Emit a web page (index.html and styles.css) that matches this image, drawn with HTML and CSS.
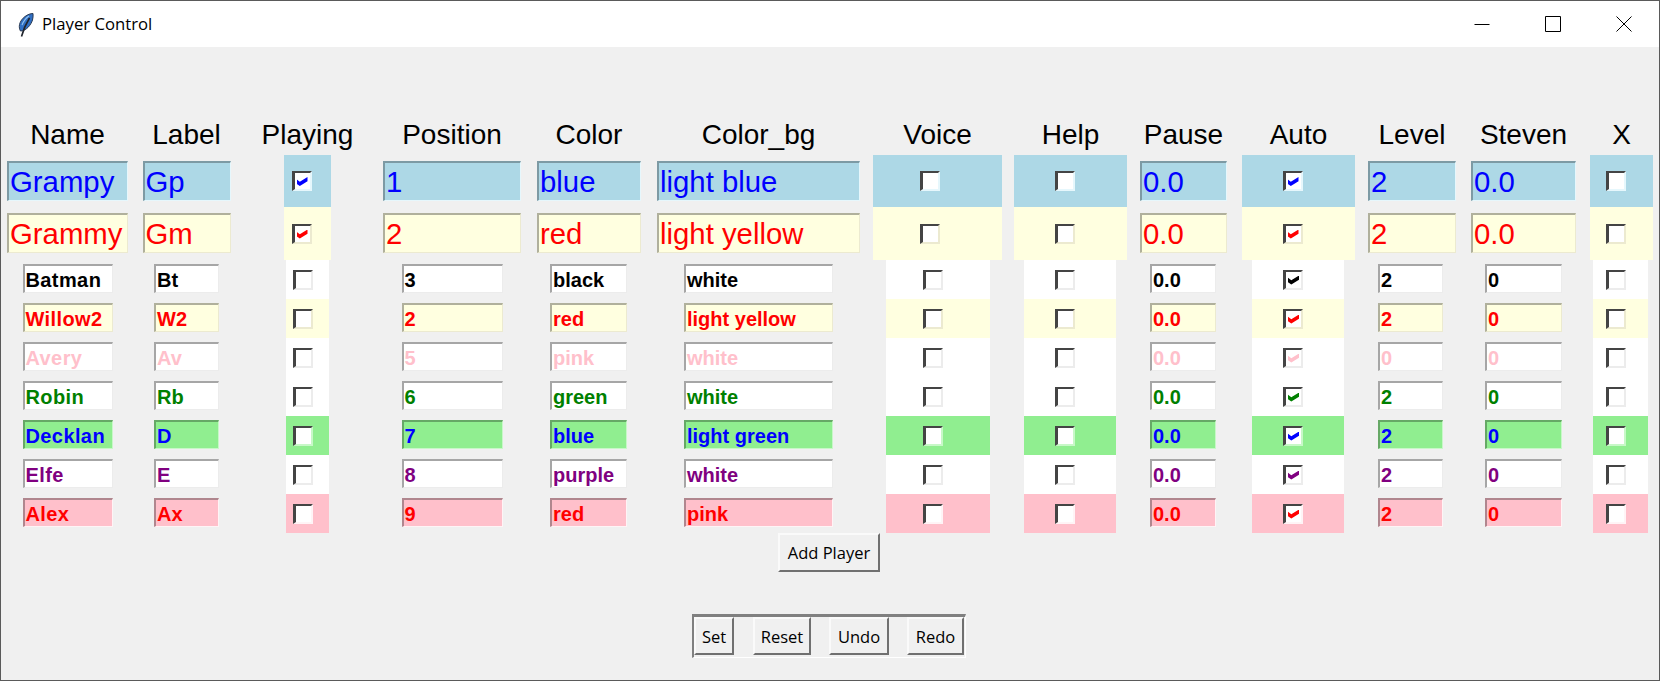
FILE: index.html
```html
<!DOCTYPE html>
<html>
<head>
  <meta charset="utf-8">
  <link rel="stylesheet" href="styles.css">
  <title>Player Control</title>
</head>
<body>
  <div class="window">
    <div class="titlebar">
      <svg class="feather" width="16" height="24" viewBox="0 0 16 24">
        <path d="M15 0.500C10 0.500 3 5 1.500 11.500c-.5 2.500 0 5 1 6.500C8 18 13 12 14.500 7c.5-2 .8-4.500 .5-6.500z" fill="#2f6fc4" stroke="#2b3a52" stroke-width="1"/>
        <path d="M11.500 5C9 9 6 14 3.500 23.500" fill="none" stroke="#20242c" stroke-width="1.600"/>
        <path d="M11 3C8 5 5.500 8 4 12" fill="none" stroke="#8fc0ee" stroke-width="1.200"/>
      </svg>
      <span class="title">Player Control</span>
      <div class="winctl">
        <svg width="16" height="16" viewBox="0 0 16 16"><path d="M0.500 8.500H15.500" stroke="#000" fill="none"/></svg>
        <svg width="16" height="16" viewBox="0 0 16 16"><path d="M0.500 0.500H15.500V15.500H0.500Z" stroke="#000" fill="none"/></svg>
        <svg width="16" height="16" viewBox="0 0 16 16"><path d="M0.500 0.500L15.500 15.500M15.500 0.500L0.500 15.500" stroke="#000" fill="none"/></svg>
      </div>
    </div>

    <div class="content">
      <div class="row head">
        <div>Name</div><div>Label</div><div>Playing</div><div>Position</div><div>Color</div><div>Color_bg</div><div>Voice</div><div>Help</div><div>Pause</div><div>Auto</div><div>Level</div><div>Steven</div><div>X</div>
      </div>

      <div class="row big r1 bg-blue fg-blue">
        <div class="cell"><div class="entry w-name">Grampy</div></div>
        <div class="cell"><div class="entry w-label">Gp</div></div>
        <div class="cell"><div class="band w-playing"><span class="check on"></span></div></div>
        <div class="cell"><div class="entry w-position">1</div></div>
        <div class="cell"><div class="entry w-color">blue</div></div>
        <div class="cell"><div class="entry w-colorbg">light blue</div></div>
        <div class="cell"><div class="band w-voice"><span class="check"></span></div></div>
        <div class="cell"><div class="band w-help"><span class="check"></span></div></div>
        <div class="cell"><div class="entry w-pause">0.0</div></div>
        <div class="cell"><div class="band w-auto"><span class="check on"></span></div></div>
        <div class="cell"><div class="entry w-level">2</div></div>
        <div class="cell"><div class="entry w-steven">0.0</div></div>
        <div class="cell"><div class="band w-x"><span class="check"></span></div></div>
      </div>

      <div class="row big r2 bg-yellow fg-red">
        <div class="cell"><div class="entry w-name">Grammy</div></div>
        <div class="cell"><div class="entry w-label">Gm</div></div>
        <div class="cell"><div class="band w-playing"><span class="check on"></span></div></div>
        <div class="cell"><div class="entry w-position">2</div></div>
        <div class="cell"><div class="entry w-color">red</div></div>
        <div class="cell"><div class="entry w-colorbg">light yellow</div></div>
        <div class="cell"><div class="band w-voice"><span class="check"></span></div></div>
        <div class="cell"><div class="band w-help"><span class="check"></span></div></div>
        <div class="cell"><div class="entry w-pause">0.0</div></div>
        <div class="cell"><div class="band w-auto"><span class="check on"></span></div></div>
        <div class="cell"><div class="entry w-level">2</div></div>
        <div class="cell"><div class="entry w-steven">0.0</div></div>
        <div class="cell"><div class="band w-x"><span class="check"></span></div></div>
      </div>

      <div class="row small bg-white fg-black">
        <div class="cell"><div class="entry w-name">Batman</div></div>
        <div class="cell"><div class="entry w-label">Bt</div></div>
        <div class="cell"><div class="band w-playing"><span class="check"></span></div></div>
        <div class="cell"><div class="entry w-position">3</div></div>
        <div class="cell"><div class="entry w-color">black</div></div>
        <div class="cell"><div class="entry w-colorbg">white</div></div>
        <div class="cell"><div class="band w-voice"><span class="check"></span></div></div>
        <div class="cell"><div class="band w-help"><span class="check"></span></div></div>
        <div class="cell"><div class="entry w-pause">0.0</div></div>
        <div class="cell"><div class="band w-auto"><span class="check on"></span></div></div>
        <div class="cell"><div class="entry w-level">2</div></div>
        <div class="cell"><div class="entry w-steven">0</div></div>
        <div class="cell"><div class="band w-x"><span class="check"></span></div></div>
      </div>

      <div class="row small bg-yellow fg-red">
        <div class="cell"><div class="entry w-name">Willow2</div></div>
        <div class="cell"><div class="entry w-label">W2</div></div>
        <div class="cell"><div class="band w-playing"><span class="check"></span></div></div>
        <div class="cell"><div class="entry w-position">2</div></div>
        <div class="cell"><div class="entry w-color">red</div></div>
        <div class="cell"><div class="entry w-colorbg">light yellow</div></div>
        <div class="cell"><div class="band w-voice"><span class="check"></span></div></div>
        <div class="cell"><div class="band w-help"><span class="check"></span></div></div>
        <div class="cell"><div class="entry w-pause">0.0</div></div>
        <div class="cell"><div class="band w-auto"><span class="check on"></span></div></div>
        <div class="cell"><div class="entry w-level">2</div></div>
        <div class="cell"><div class="entry w-steven">0</div></div>
        <div class="cell"><div class="band w-x"><span class="check"></span></div></div>
      </div>

      <div class="row small bg-white fg-pink">
        <div class="cell"><div class="entry w-name">Avery</div></div>
        <div class="cell"><div class="entry w-label">Av</div></div>
        <div class="cell"><div class="band w-playing"><span class="check"></span></div></div>
        <div class="cell"><div class="entry w-position">5</div></div>
        <div class="cell"><div class="entry w-color">pink</div></div>
        <div class="cell"><div class="entry w-colorbg">white</div></div>
        <div class="cell"><div class="band w-voice"><span class="check"></span></div></div>
        <div class="cell"><div class="band w-help"><span class="check"></span></div></div>
        <div class="cell"><div class="entry w-pause">0.0</div></div>
        <div class="cell"><div class="band w-auto"><span class="check on"></span></div></div>
        <div class="cell"><div class="entry w-level">0</div></div>
        <div class="cell"><div class="entry w-steven">0</div></div>
        <div class="cell"><div class="band w-x"><span class="check"></span></div></div>
      </div>

      <div class="row small bg-white fg-green">
        <div class="cell"><div class="entry w-name">Robin</div></div>
        <div class="cell"><div class="entry w-label">Rb</div></div>
        <div class="cell"><div class="band w-playing"><span class="check"></span></div></div>
        <div class="cell"><div class="entry w-position">6</div></div>
        <div class="cell"><div class="entry w-color">green</div></div>
        <div class="cell"><div class="entry w-colorbg">white</div></div>
        <div class="cell"><div class="band w-voice"><span class="check"></span></div></div>
        <div class="cell"><div class="band w-help"><span class="check"></span></div></div>
        <div class="cell"><div class="entry w-pause">0.0</div></div>
        <div class="cell"><div class="band w-auto"><span class="check on"></span></div></div>
        <div class="cell"><div class="entry w-level">2</div></div>
        <div class="cell"><div class="entry w-steven">0</div></div>
        <div class="cell"><div class="band w-x"><span class="check"></span></div></div>
      </div>

      <div class="row small bg-green fg-blue">
        <div class="cell"><div class="entry w-name">Decklan</div></div>
        <div class="cell"><div class="entry w-label">D</div></div>
        <div class="cell"><div class="band w-playing"><span class="check"></span></div></div>
        <div class="cell"><div class="entry w-position">7</div></div>
        <div class="cell"><div class="entry w-color">blue</div></div>
        <div class="cell"><div class="entry w-colorbg">light green</div></div>
        <div class="cell"><div class="band w-voice"><span class="check"></span></div></div>
        <div class="cell"><div class="band w-help"><span class="check"></span></div></div>
        <div class="cell"><div class="entry w-pause">0.0</div></div>
        <div class="cell"><div class="band w-auto"><span class="check on"></span></div></div>
        <div class="cell"><div class="entry w-level">2</div></div>
        <div class="cell"><div class="entry w-steven">0</div></div>
        <div class="cell"><div class="band w-x"><span class="check"></span></div></div>
      </div>

      <div class="row small bg-white fg-purple">
        <div class="cell"><div class="entry w-name">Elfe</div></div>
        <div class="cell"><div class="entry w-label">E</div></div>
        <div class="cell"><div class="band w-playing"><span class="check"></span></div></div>
        <div class="cell"><div class="entry w-position">8</div></div>
        <div class="cell"><div class="entry w-color">purple</div></div>
        <div class="cell"><div class="entry w-colorbg">white</div></div>
        <div class="cell"><div class="band w-voice"><span class="check"></span></div></div>
        <div class="cell"><div class="band w-help"><span class="check"></span></div></div>
        <div class="cell"><div class="entry w-pause">0.0</div></div>
        <div class="cell"><div class="band w-auto"><span class="check on"></span></div></div>
        <div class="cell"><div class="entry w-level">2</div></div>
        <div class="cell"><div class="entry w-steven">0</div></div>
        <div class="cell"><div class="band w-x"><span class="check"></span></div></div>
      </div>

      <div class="row small bg-pink fg-red">
        <div class="cell"><div class="entry w-name">Alex</div></div>
        <div class="cell"><div class="entry w-label">Ax</div></div>
        <div class="cell"><div class="band w-playing"><span class="check"></span></div></div>
        <div class="cell"><div class="entry w-position">9</div></div>
        <div class="cell"><div class="entry w-color">red</div></div>
        <div class="cell"><div class="entry w-colorbg">pink</div></div>
        <div class="cell"><div class="band w-voice"><span class="check"></span></div></div>
        <div class="cell"><div class="band w-help"><span class="check"></span></div></div>
        <div class="cell"><div class="entry w-pause">0.0</div></div>
        <div class="cell"><div class="band w-auto"><span class="check on"></span></div></div>
        <div class="cell"><div class="entry w-level">2</div></div>
        <div class="cell"><div class="entry w-steven">0</div></div>
        <div class="cell"><div class="band w-x"><span class="check"></span></div></div>
      </div>

      <button type="button" class="btn add-player">Add Player</button>

      <div class="actions">
        <button type="button" class="btn">Set</button>
        <button type="button" class="btn">Reset</button>
        <button type="button" class="btn">Undo</button>
        <button type="button" class="btn">Redo</button>
      </div>
    </div>
  </div>
</body>
</html>
```

FILE: styles.css
```css
:root {
	--face: #f0f0f0;
	--columns: 133px 105px 137px 152px 122px 217px 141px 125px 101px 129px 98px 125px 71px;
}

body {
	margin: 0;
	background-color: white;
	font-family: "Liberation Sans", Arial, sans-serif;
}

.window {
	box-sizing: border-box;
	height: 681px;
	overflow: hidden;
	border: 1px solid #5a5a5a;
	background-color: var(--face);
}

/* Title bar */
.titlebar {
	display: flex;
	align-items: center;
	height: 46px;
	background-color: white;
}

.feather {
	margin-left: 17px;
	margin-top: 1px;
}

.title {
	margin-left: 8px;
	padding-bottom: 2px;
	font-family: "Open Sans", sans-serif;
	font-size: 16.7px;
	color: #000;
}

.winctl {
	display: flex;
	gap: 55px;
	margin-left: auto;
	margin-right: 27px;
}

.winctl svg {
	display: block;
}

/* Player grid */
.content {
	display: flex;
	flex-direction: column;
	align-items: center;
	padding-top: 70px;
}

.row {
	display: grid;
	grid-template-columns: var(--columns);
	width: 100%;
}

.head {
	height: 38px;
	font-size: 28px;
	line-height: 36px;
	text-align: center;
	color: #000;
}

.big {
	height: 52px;
	font-size: 29.33px;
}

.r2 {
	height: 53px;
}

.small {
	height: 39px;
	font-size: 20px;
	font-weight: bold;
}

.cell {
	display: flex;
	justify-content: center;
	align-items: flex-start;
}

.entry {
	box-sizing: border-box;
	white-space: nowrap;
	overflow: hidden;
	background-color: var(--bg);
	color: var(--fg);
	border-style: solid;
	border-width: 2px 1px 1px 2px;
	border-color: var(--dark) var(--light) var(--light) var(--dark);
}

.big .entry {
	height: 40px;
	margin-top: 6px;
	padding-left: 1px;
	line-height: 37px;
}

.small .entry {
	height: 29px;
	margin-top: 4px;
	padding-left: 1px;
	line-height: 28px;
}

.small .w-name {
	letter-spacing: 0.4px;
}

.band {
	box-sizing: border-box;
	display: flex;
	justify-content: center;
	align-items: center;
	height: 100%;
	padding-right: 10px;
	background-color: var(--bg);
	color: var(--fg);
}

.big .band { padding-right: 12px; }
.big .w-voice { padding-right: 15px; }

/* big and small widths of each column */
.big .w-name { width: 121px; }
.small .w-name { width: 90px; }
.big .w-label { width: 88px; }
.small .w-label { width: 65px; }
.big .w-playing { width: 47px; }
.small .w-playing { width: 43px; }
.big .w-position { width: 138px; }
.small .w-position { width: 101px; }
.big .w-color { width: 104px; }
.small .w-color { width: 77px; margin-right: 1px; }
.big .w-colorbg { width: 203px; }
.small .w-colorbg { width: 149px; }
.big .w-voice { width: 129px; }
.small .w-voice { width: 104px; }
.big .w-help { width: 113px; }
.small .w-help { width: 92px; margin-right: 1px; }
.big .w-pause { width: 87px; }
.small .w-pause { width: 66px; margin-right: 1px; }
.big .w-auto { width: 113px; }
.small .w-auto { width: 92px; margin-right: 1px; }
.big .w-level { width: 88px; }
.small .w-level { width: 65px; margin-right: 3px; }
.big .w-steven { width: 105px; }
.small .w-steven { width: 77px; }
.big .w-x { width: 63px; }
.small .w-x { width: 55px; margin-right: 2px; }

/* Row colours */
.bg-blue { --bg: #add8e6; --dark: #7d9aa4; --light: #e6f7fc; }
.bg-yellow { --bg: #ffffe0; --dark: #b0b09c; --light: #ecead0; }
.bg-white { --bg: #ffffff; --dark: #a6a6a6; --light: #ececec; }
.bg-green { --bg: #90ee90; --dark: #66a866; --light: #c8f8c8; }
.bg-pink { --bg: #ffc0cb; --dark: #b0868e; --light: #fff4f6; }

.fg-blue { --fg: #0000ff; }
.fg-red { --fg: #ff0000; }
.fg-black { --fg: #000000; }
.fg-pink { --fg: #ffc0cb; }
.fg-green { --fg: #008000; }
.fg-purple { --fg: #800080; }

/* Check boxes */
.check {
	box-sizing: border-box;
	position: relative;
	display: block;
	width: 20px;
	height: 20px;
	background-color: white;
	border-style: solid;
	border-width: 2px 2px 2px 3px;
	border-color: #444 var(--light) var(--light) #444;
}

.check.on::after {
	content: "";
	position: absolute;
	left: 2px;
	top: 4px;
	width: 11px;
	height: 9px;
	background-color: var(--fg);
	clip-path: polygon(0 25%, 30% 52%, 100% 0, 100% 48%, 30% 100%, 0 75%);
}

/* Buttons */
.btn {
	box-sizing: border-box;
	height: 38px;
	padding: 0;
	font-family: "Open Sans", sans-serif;
	font-size: 16.5px;
	color: #000;
	background-color: var(--face);
	border-style: solid;
	border-width: 2px;
	border-color: #fafafa #707070 #707070 #fafafa;
}

.add-player {
	width: 102px;
	height: 39px;
	margin-right: 2px;
}

.actions {
	display: flex;
	gap: 18px;
	margin-top: 42px;
	margin-right: 2px;
	padding: 0 1px 2px 0;
	border-style: solid;
	border-width: 3px 1px 1px 2px;
	border-color: #808080 white white #808080;
}

.actions .btn:nth-child(1) { width: 40px; margin-right: 1px; }
.actions .btn:nth-child(2) { width: 58px; }
.actions .btn:nth-child(3) { width: 60px; }
.actions .btn:nth-child(4) { width: 57px; }
```
